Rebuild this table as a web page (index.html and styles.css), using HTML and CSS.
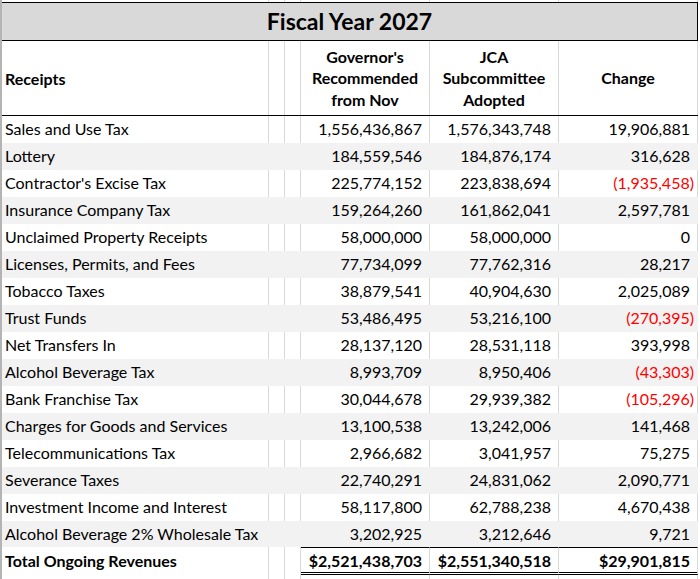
FILE: index.html
```html
<!DOCTYPE html>
<html lang="en">
<head>
<meta charset="utf-8">
<title>Fiscal Year 2027</title>
<link rel="stylesheet" href="styles.css">
</head>
<body>
<div class="sheet">
  <div class="row strip"><div class="c"></div><div class="c"></div><div class="c"></div><div class="c"></div><div class="c"></div><div class="c"></div></div>
  <div class="title">Fiscal Year 2027</div>
  <div class="row head">
    <div class="c label">Receipts</div><div class="c"></div><div class="c"></div>
    <div class="c hc">Governor's<br>Recommended<br>from Nov</div>
    <div class="c hc">JCA<br>Subcommittee<br>Adopted</div>
    <div class="c hc">Change</div>
  </div>

  <div class="row"><div class="c label">Sales and Use Tax</div><div class="c"></div><div class="c"></div><div class="c num">1,556,436,867</div><div class="c num">1,576,343,748</div><div class="c num">19,906,881</div></div>
  <div class="row alt"><div class="c label">Lottery</div><div class="c"></div><div class="c"></div><div class="c num">184,559,546</div><div class="c num">184,876,174</div><div class="c num">316,628</div></div>
  <div class="row"><div class="c label">Contractor's Excise Tax</div><div class="c"></div><div class="c"></div><div class="c num">225,774,152</div><div class="c num">223,838,694</div><div class="c num neg">(1,935,458)</div></div>
  <div class="row alt"><div class="c label">Insurance Company Tax</div><div class="c"></div><div class="c"></div><div class="c num">159,264,260</div><div class="c num">161,862,041</div><div class="c num">2,597,781</div></div>
  <div class="row"><div class="c label">Unclaimed Property Receipts</div><div class="c"></div><div class="c"></div><div class="c num">58,000,000</div><div class="c num">58,000,000</div><div class="c num">0</div></div>
  <div class="row alt"><div class="c label">Licenses, Permits, and Fees</div><div class="c"></div><div class="c"></div><div class="c num">77,734,099</div><div class="c num">77,762,316</div><div class="c num">28,217</div></div>
  <div class="row"><div class="c label">Tobacco Taxes</div><div class="c"></div><div class="c"></div><div class="c num">38,879,541</div><div class="c num">40,904,630</div><div class="c num">2,025,089</div></div>
  <div class="row alt"><div class="c label">Trust Funds</div><div class="c"></div><div class="c"></div><div class="c num">53,486,495</div><div class="c num">53,216,100</div><div class="c num neg">(270,395)</div></div>
  <div class="row"><div class="c label">Net Transfers In</div><div class="c"></div><div class="c"></div><div class="c num">28,137,120</div><div class="c num">28,531,118</div><div class="c num">393,998</div></div>
  <div class="row alt"><div class="c label">Alcohol Beverage Tax</div><div class="c"></div><div class="c"></div><div class="c num">8,993,709</div><div class="c num">8,950,406</div><div class="c num neg">(43,303)</div></div>
  <div class="row"><div class="c label">Bank Franchise Tax</div><div class="c"></div><div class="c"></div><div class="c num">30,044,678</div><div class="c num">29,939,382</div><div class="c num neg">(105,296)</div></div>
  <div class="row alt"><div class="c label">Charges for Goods and Services</div><div class="c"></div><div class="c"></div><div class="c num">13,100,538</div><div class="c num">13,242,006</div><div class="c num">141,468</div></div>
  <div class="row"><div class="c label">Telecommunications Tax</div><div class="c"></div><div class="c"></div><div class="c num">2,966,682</div><div class="c num">3,041,957</div><div class="c num">75,275</div></div>
  <div class="row alt"><div class="c label">Severance Taxes</div><div class="c"></div><div class="c"></div><div class="c num">22,740,291</div><div class="c num">24,831,062</div><div class="c num">2,090,771</div></div>
  <div class="row"><div class="c label">Investment Income and Interest</div><div class="c"></div><div class="c"></div><div class="c num">58,117,800</div><div class="c num">62,788,238</div><div class="c num">4,670,438</div></div>
  <div class="row alt last"><div class="c label">Alcohol Beverage 2% Wholesale Tax</div><div class="c"></div><div class="c"></div><div class="c num">3,202,925</div><div class="c num">3,212,646</div><div class="c num">9,721</div></div>

  <div class="row total"><div class="c label">Total Ongoing Revenues</div><div class="c"></div><div class="c"></div><div class="c num sum">$2,521,438,703</div><div class="c num sum">$2,551,340,518</div><div class="c num sum">$29,901,815</div></div>
  <div class="row filler"><div class="c"></div><div class="c"></div><div class="c"></div><div class="c"></div><div class="c"></div><div class="c"></div></div>
</div>
</body>
</html>
```

FILE: styles.css
```css
html, body {
  margin: 0;
  padding: 0;
  background: #fff;
}

body {
  font-family: Lato, "Open Sans", sans-serif;
  font-size: 16px;
  color: #000;
}

.sheet {
  width: 696px;
  height: 579px;
  border-left: 2px solid #b4b4b4;
  overflow: hidden;
}

.row {
  display: grid;
  grid-template-columns: 267px 16px 16px 129px 129px 139px;
  height: 27px;
}

.c {
  box-sizing: border-box;
  border-right: 1px solid #d9d9d9;
  display: flex;
  align-items: center;
  padding: 0 3px 2px;
  white-space: nowrap;
  overflow: hidden;
}

.strip {
  height: 2px;
}

.strip .c,
.filler .c {
  padding: 0;
}

.title {
  box-sizing: border-box;
  height: 39px;
  border-top: 1px solid #000;
  border-bottom: 1px solid #000;
  border-right: 1px solid #000;
  background: #d9d9d9;
  display: flex;
  align-items: center;
  justify-content: center;
  padding-bottom: 1px;
  font-weight: bold;
  font-size: 23px;
}

.head {
  box-sizing: border-box;
  height: 75px;
  border-bottom: 1px solid #000;
  font-weight: bold;
}

.head .c {
  padding-bottom: 0;
}

.hc {
  justify-content: center;
  text-align: center;
  line-height: 21.5px;
}

.alt {
  background: #f2f2f2;
}

.alt .c {
  border-right-color: transparent;
}

.last {
  height: 26px;
}

.num {
  justify-content: flex-end;
  padding-right: 7px;
}

.neg {
  color: #ff0000;
  padding-right: 3px;
}

.total {
  height: 28px;
  font-weight: bold;
}

.sum {
  border-top: 1px solid #000;
  border-bottom: 3px double #000;
  padding-top: 1px;
  padding-bottom: 0;
}

.filler {
  height: 12px;
}
```
